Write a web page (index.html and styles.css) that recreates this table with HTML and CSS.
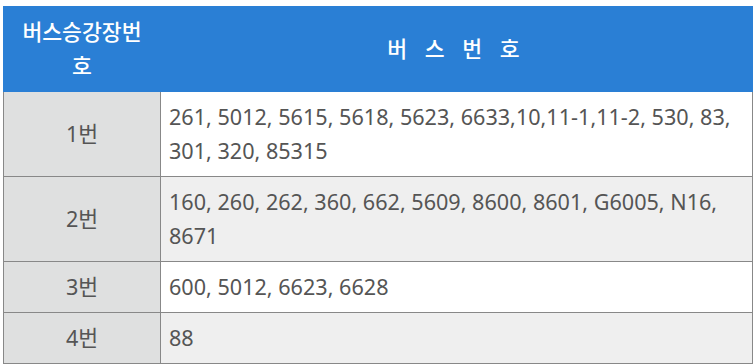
FILE: index.html
```
<!DOCTYPE html>
<html lang="ko">
<head>
<meta charset="utf-8">
<link rel="stylesheet" href="styles.css">
</head>
<body>
<table class="bus-table">
  <colgroup>
    <col class="col-stop">
    <col class="col-bus">
  </colgroup>
  <thead>
    <tr>
      <th class="head-stop">버스승강장번호</th>
      <th class="head-bus">버 스 번 호</th>
    </tr>
  </thead>
  <tbody>
    <tr class="odd">
      <td class="stop">1번</td>
      <td class="bus">261, 5012, 5615, 5618, 5623, 6633,10,11-1,11-2, 530, 83, 301, 320, 85315</td>
    </tr>
    <tr class="even">
      <td class="stop">2번</td>
      <td class="bus">160, 260, 262, 360, 662, 5609, 8600, 8601, G6005, N16, 8671</td>
    </tr>
    <tr class="odd">
      <td class="stop">3번</td>
      <td class="bus">600, 5012, 6623, 6628</td>
    </tr>
    <tr class="even">
      <td class="stop">4번</td>
      <td class="bus">88</td>
    </tr>
  </tbody>
</table>
</body>
</html>
```
FILE: styles.css
```
html, body {
  margin: 0;
  padding: 0;
  background: #ffffff;
}

body {
  padding: 6px 2px 0 3px;
  font-family: "Noto Sans", "Noto Sans CJK KR", sans-serif;
}

.bus-table {
  width: 750px;
  border-collapse: collapse;
  table-layout: fixed;
  font-size: 21.6px;
  line-height: 34px;
  color: #555555;
}

.col-stop {
  width: 157px;
}

.bus-table th {
  background: #2a7fd5;
  color: #ffffff;
  font-weight: 500;
  text-align: center;
  padding: 8px 10px;
  border: 1px solid #2a7fd5;
}

.head-stop {
  padding: 7px 10px 8px;
}

.head-bus {
  letter-spacing: 6px;
}

.bus-table td {
  border: 1px solid #888888;
  padding: 8px 8px;
}

.stop {
  background: #dfe0e0;
  text-align: center;
}

.odd .bus {
  background: #ffffff;
}

.even .bus {
  background: #efefef;
}
```
